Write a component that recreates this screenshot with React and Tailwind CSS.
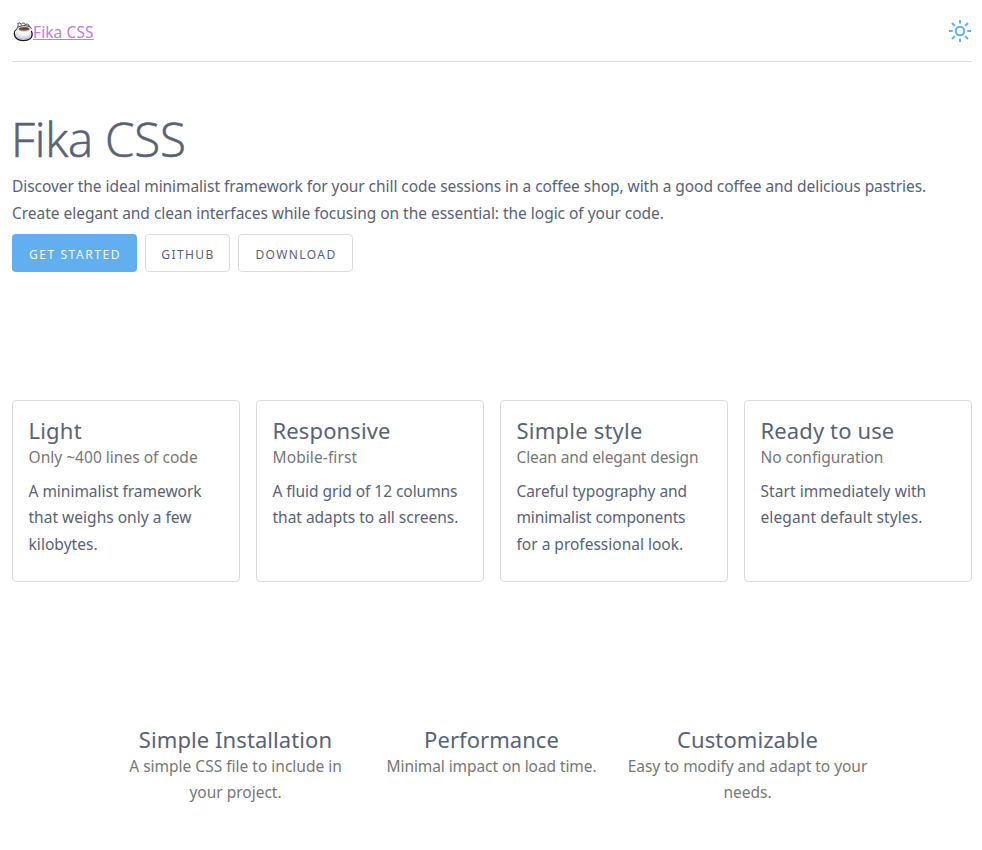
const features = [
  { title: ['Light', 'tracking-[0.200px]'], subtitle: ['Only ~400 lines of code', 'tracking-[0.020px]'], lines: [['A minimalist framework', 'tracking-[-0.020px]'], ['that weighs only a few', 'tracking-[0.020px]'], ['kilobytes.', 'tracking-[0.050px]']] },
  { title: ['Responsive', 'tracking-[0.120px]'], subtitle: ['Mobile-first', 'tracking-[0.100px]'], lines: [['A fluid grid of 12 columns', 'tracking-[-0.050px]'], ['that adapts to all screens.', 'tracking-[-0.020px]']] },
  { title: ['Simple style', 'tracking-[0.220px]'], subtitle: ['Clean and elegant design', 'tracking-[-0.100px]'], lines: [['Careful typography and', 'tracking-[-0.060px]'], ['minimalist components', 'tracking-[-0.120px]'], ['for a professional look.', '']] },
  { title: ['Ready to use', 'tracking-[0.120px]'], subtitle: ['No configuration', 'tracking-[-0.030px]'], lines: [['Start immediately with', 'tracking-[0.060px]'], ['elegant default styles.', 'tracking-[0.100px]']] },
];

const benefits = [
  { title: ['Simple Installation', 'tracking-[0.080px]'], lines: [['A simple CSS file to include in', ''], ['your project.', '']] },
  { title: ['Performance', 'tracking-[0.060px]'], lines: [['Minimal impact on load time.', 'tracking-[-0.080px]']] },
  { title: ['Customizable', 'tracking-[0.080px]'], lines: [['Easy to modify and adapt to your', 'tracking-[-0.030px]'], ['needs.', '']] },
];

function Line({ text, spacing = '' }) {
  return <span className={`block whitespace-nowrap ${spacing}`}>{text}</span>;
}

function CoffeeLogo() {
  return (
    <svg className="h-5 w-[21px] shrink-0" viewBox="0 0 21 20">
      <path d="M4.500 5.500 5.300 3l-.6-1.600L7 .9l1.200 1.600L9.600.9l2 .4.500 1.500 2-.9 1.800 1-.3 2.800Z" fill="#fff" stroke="#3b3f49" strokeWidth=".9" strokeLinejoin="round" />
      <path d="M1.300 11.500C1.300 8 4 6.500 10.300 6.500s8.900 2 8.900 5.500c0 4.200-3.600 6.600-8.900 6.600s-9-2.800-9-7.100Z" fill="#dedde9" stroke="#15171c" strokeWidth="1.300" />
      <path d="M2.600 11.500c-.3-1.700.5-2.900 1.800-3.100" fill="none" stroke="#fff" strokeWidth="1.200" />
      <path d="M3.800 6.500c0-1.700 3-2.900 7.100-2.900s7.500 1.200 7.500 2.900c0 4.500-2.600 7.600-7.300 7.600S3.800 11 3.800 6.500Z" fill="#f6f6fa" />
      <path d="M3.800 7.300c0-2.100 3-3.600 7.100-3.600s7.500 1.300 7.500 3.200" fill="none" stroke="#15171c" strokeWidth=".9" />
      <path d="M4 15c3 2.500 9.500 2.700 13.200-.3" fill="none" stroke="#b5b1cb" />
      <ellipse cx="11.100" cy="6.900" rx="5.400" ry="1.900" fill="#6e4632" />
      <path d="M6.500 7.900c1.800 1.400 7.400 1.400 9.200 0" fill="none" stroke="#cb9876" />
    </svg>
  );
}

function SunIcon() {
  return (
    <svg className="size-6" viewBox="0 0 24 24" fill="none" stroke="#61afef" strokeWidth="2">
      <circle cx="12" cy="12" r="4.200" />
      <path d="M12 1v3.500M12 19.500V23M1 12h3.800M19.200 12H23M4 4l2.800 2.800M17.200 17.200 20 20M4 20l2.800-2.800M17.200 6.800 20 4" />
    </svg>
  );
}

export default function App() {
  return (
    <div className="h-[850px] overflow-hidden bg-white pr-2.5 pl-3 font-['Noto_Sans',sans-serif] text-[15.500px] leading-[26.600px] text-[#596275]">
      <header className="flex h-[62px] items-center justify-between border-b border-[#dcdcdc]">
        <a href="#" className="flex items-center pt-[3px] pl-px text-[#c678dd]">
          <CoffeeLogo />
          <span className="-ml-px underline tracking-[0.100px]">Fika CSS</span>
        </a>
        <button aria-label="Toggle theme"><SunIcon /></button>
      </header>
      <section className="h-[338px] pt-11">
        <h1 className="-ml-px mb-px font-['Open_Sans',sans-serif] text-[47.500px] leading-[66px] font-light tracking-[-0.200px] [-webkit-text-stroke:0.600px_#596275]">Fika CSS</h1>
        <p>
          <Line spacing="tracking-[-0.055px]" text="Discover the ideal minimalist framework for your chill code sessions in a coffee shop, with a good coffee and delicious pastries." />
          <Line spacing="tracking-[-0.030px]" text="Create elegant and clean interfaces while focusing on the essential: the logic of your code." />
        </p>
        <div className="mt-2 flex gap-2 text-[12px] leading-4 tracking-[1.400px] uppercase">
          <button className="h-[38px] w-[125px] rounded bg-[#61afef] pt-1 pl-px uppercase tracking-[1.550px] text-[#f5f5f5]">Get started</button>
          <button className="h-[38px] w-[85px] rounded border border-[#dcdcdc] pt-1 pl-px uppercase">GitHub</button>
          <button className="h-[38px] w-[115px] rounded border border-[#dcdcdc] pt-1 pl-px uppercase">Download</button>
        </div>
      </section>
      <section className="grid h-[182px] grid-cols-4 gap-4">
        {features.map((f) => (
          <article key={f.title[0]} className="rounded border border-[#dcdcdc] px-[15.500px] pt-4">
            <h2 className="text-[22px] leading-[27px]"><Line text={f.title[0]} spacing={f.title[1]} /></h2>
            <p className="text-[#777]"><Line text={f.subtitle[0]} spacing={f.subtitle[1]} /></p>
            <div className="mt-[7.300px]">{f.lines.map(([t, s]) => <Line key={t} text={t} spacing={s} />)}</div>
          </article>
        ))}
      </section>
      <section className="mt-[143px] flex justify-center gap-4 pr-px text-center">
        {benefits.map((b) => (
          <article key={b.title[0]} className="flex w-60 flex-col items-center">
            <h2 className="text-[22px] leading-[28px]"><Line text={b.title[0]} spacing={b.title[1]} /></h2>
            <div className="leading-[26.200px] text-[#777]">{b.lines.map(([t, s]) => <Line key={t} text={t} spacing={s} />)}</div>
          </article>
        ))}
      </section>
    </div>
  );
}
